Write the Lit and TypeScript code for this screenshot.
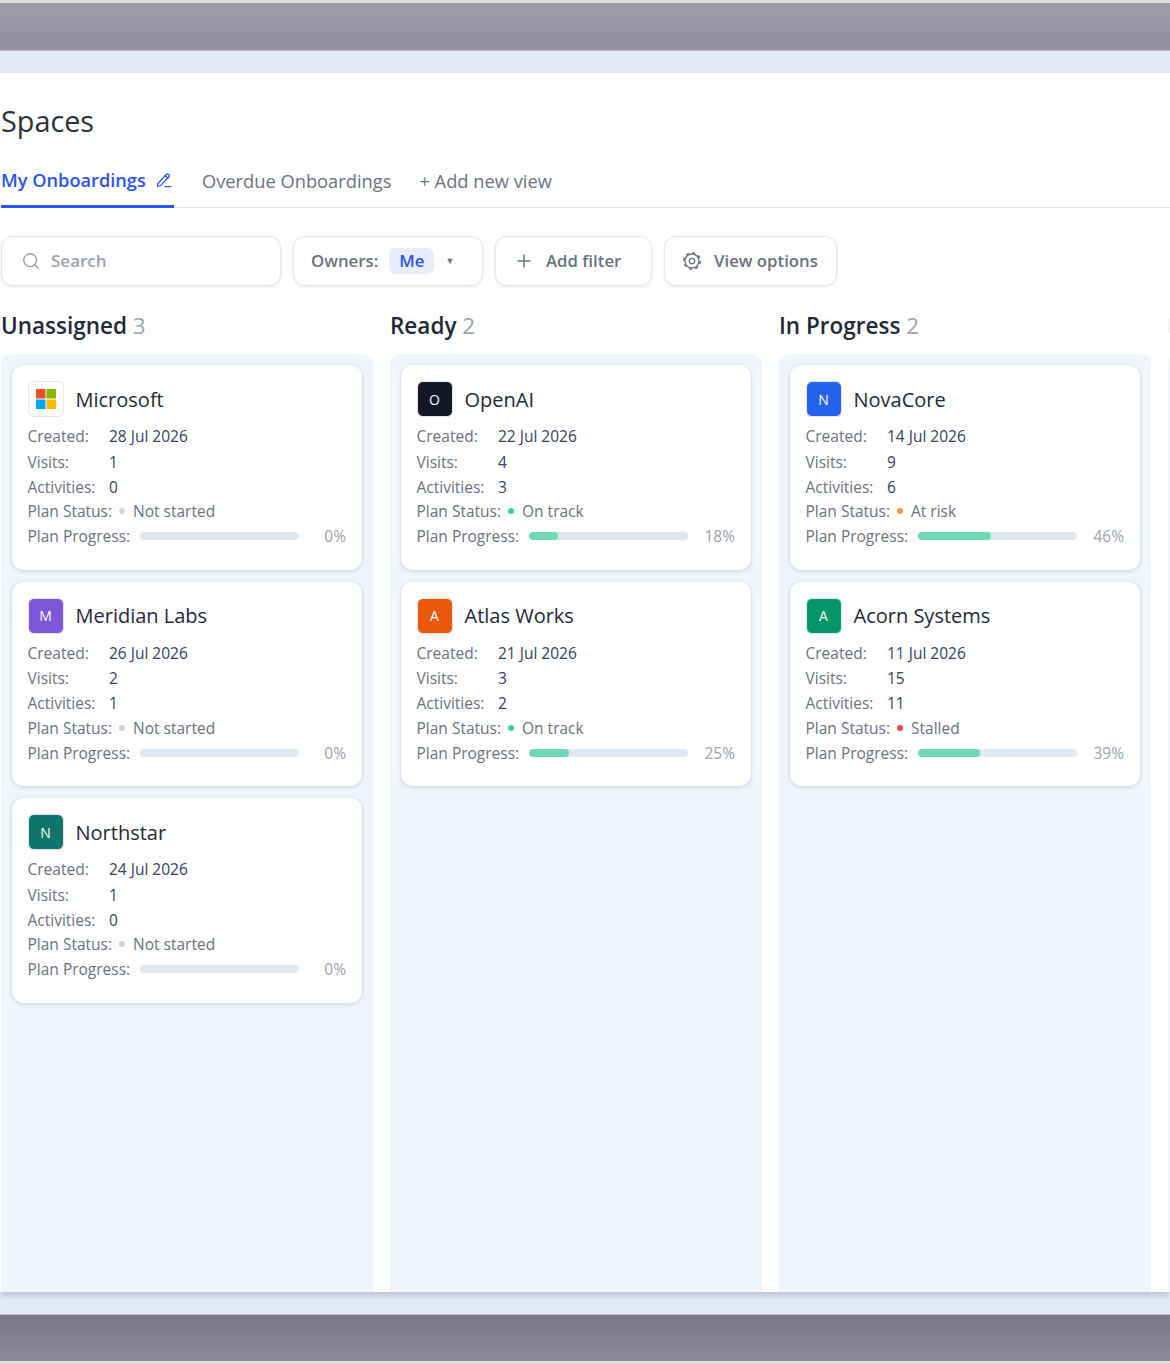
import { LitElement, html, css } from 'lit';
import { customElement } from 'lit/decorators.js';

type Card = {
  name: string;
  logo: string;
  color?: string;
  created: string;
  visits: number;
  activities: number;
  status: string;
  dot: string;
  progress: number;
};

const columns: { title: string; cards: Card[] }[] = [
  {
    title: 'Unassigned',
    cards: [
      { name: 'Microsoft', logo: 'ms', created: '28 Jul 2026', visits: 1, activities: 0, status: 'Not started', dot: '#cbd5e1', progress: 0 },
      { name: 'Meridian Labs', logo: 'M', color: '#7c55d9', created: '26 Jul 2026', visits: 2, activities: 1, status: 'Not started', dot: '#cbd5e1', progress: 0 },
      { name: 'Northstar', logo: 'N', color: '#0f766e', created: '24 Jul 2026', visits: 1, activities: 0, status: 'Not started', dot: '#cbd5e1', progress: 0 },
    ],
  },
  {
    title: 'Ready',
    cards: [
      { name: 'OpenAI', logo: 'O', color: '#111827', created: '22 Jul 2026', visits: 4, activities: 3, status: 'On track', dot: '#34d399', progress: 18 },
      { name: 'Atlas Works', logo: 'A', color: '#ea580c', created: '21 Jul 2026', visits: 3, activities: 2, status: 'On track', dot: '#34d399', progress: 25 },
    ],
  },
  {
    title: 'In Progress',
    cards: [
      { name: 'NovaCore', logo: 'N', color: '#2563eb', created: '14 Jul 2026', visits: 9, activities: 6, status: 'At risk', dot: '#fb923c', progress: 46 },
      { name: 'Acorn Systems', logo: 'A', color: '#059669', created: '11 Jul 2026', visits: 15, activities: 11, status: 'Stalled', dot: '#ef4444', progress: 39 },
    ],
  },
];

@customElement('app-root')
export class AppRoot extends LitElement {
  static styles = css`
    :host {
      display: block;
      height: 1364px;
      overflow: hidden;
      background: #e2e8f4;
      font-family: 'Open Sans', sans-serif;
      color: #1f2937;
    }
    .edge {
      height: 3px;
      background: #dedede;
    }
    .chrome {
      height: 48px;
      background: linear-gradient(#9e9ba9, #908d9d);
      border-bottom: 1px solid #b9b8c6;
      box-sizing: border-box;
    }
    .chrome.bottom {
      height: 47px;
      background: linear-gradient(#797786, #8d8a9b);
      border-bottom: 0;
      border-top: 1px solid #c3c2d2;
    }
    .gap {
      height: 22px;
    }
    .panel {
      height: 1219px;
      background: #fff;
      box-shadow: 0 4px 5px -1px rgba(90, 100, 130, 0.3);
      position: relative;
      overflow: hidden;
      display: flex;
      flex-direction: column;
    }
    h1 {
      margin: 28px 0 0 1px;
      font-size: 28.8px;
      line-height: 40px;
      font-weight: 500;
      color: #2d3239;
    }
    .tabs {
      display: flex;
      align-items: stretch;
      margin-top: 20px;
      height: 47px;
      box-sizing: border-box;
      border-bottom: 1px solid #e5e7eb;
      font-size: 18.3px;
      color: #6b7280;
      white-space: nowrap;
    }
    .tab {
      display: flex;
      align-items: center;
      height: 47px;
      padding-bottom: 9px;
      box-sizing: border-box;
    }
    .tab.active {
      margin-left: 1px;
      width: 173px;
      gap: 10px;
      color: #2b55ee;
      font-size: 18.2px;
      font-weight: 600;
      padding-bottom: 6px;
      border-bottom: 3px solid #2b55ee;
    }
    .tab.over {
      margin-left: 28px;
    }
    .tab.add {
      margin-left: 28px;
    }
    .tools {
      display: flex;
      gap: 12px;
      margin: 28px 0 0 1px;
    }
    .tool {
      height: 50px;
      box-sizing: border-box;
      display: flex;
      align-items: center;
      border: 1.5px solid #e5e7eb;
      border-radius: 12px;
      box-shadow: 0 1px 3px rgba(17, 24, 39, 0.1);
      background: #fff;
      font-size: 16.8px;
      font-weight: 600;
      color: #6b7280;
      white-space: nowrap;
      padding-bottom: 1px;
    }
    .search {
      width: 280px;
      padding-left: 20px;
      gap: 11px;
      color: #9ca3af;
      font-size: 17px;
    }
    .owners {
      width: 190px;
      padding-left: 17px;
    }
    .chip {
      margin-left: 11px;
      padding: 0 10px;
      height: 26px;
      line-height: 26px;
      border-radius: 7px;
      background: #e8eefc;
      color: #2b55ee;
    }
    .caret {
      margin-left: 11px;
      font-size: 9px;
    }
    .filter {
      width: 157px;
      padding-left: 20px;
      gap: 14px;
    }
    .view {
      width: 173px;
      padding-left: 17px;
      gap: 12px;
    }
    .board {
      display: flex;
      gap: 17px;
      margin-top: 25px;
      padding-left: 1px;
      flex: 1;
      min-height: 0;
    }
    .column {
      flex: 0 0 372px;
      display: flex;
      flex-direction: column;
    }
    .col-title {
      height: 30px;
      line-height: 30px;
      font-size: 22.5px;
      font-weight: 600;
      color: #1f2937;
      margin-bottom: 13px;
    }
    .col-title span {
      font-weight: 400;
      color: #9ca3af;
    }
    .lane {
      flex: 1;
      background: #f0f4fc;
      border-radius: 10px 10px 0 0;
      padding: 11px;
      display: flex;
      flex-direction: column;
      gap: 12px;
    }
    .ghost-head {
      height: 15px;
      margin: 7px 0 21px;
      width: 4px;
      background: #f1f2f4;
    }
    .card {
      height: 204.5px;
      box-sizing: border-box;
      background: #fff;
      border-radius: 12px;
      box-shadow: 0 1px 4px rgba(17, 24, 39, 0.16);
      padding: 16px 16px 16px 15.5px;
      font-size: 15.5px;
    }
    .head {
      display: flex;
      align-items: center;
      gap: 12px;
      margin-bottom: 6px;
    }
    .logo {
      width: 36px;
      height: 36px;
      box-sizing: border-box;
      border-radius: 6px;
      border: 1px solid #e5e7eb;
      display: flex;
      align-items: center;
      justify-content: center;
      color: #fff;
      font-size: 14px;
      font-weight: 500;
    }
    .name {
      font-size: 20px;
      font-weight: 500;
      color: #1f2937;
    }
    .row {
      display: flex;
      align-items: center;
      color: #6b7280;
      height: 25px;
    }
    .row.first {
      height: 26px;
    }
    .row.tight {
      height: 24px;
    }
    .label {
      width: 81.5px;
    }
    .value {
      color: #374160;
    }
    .status {
      display: flex;
      align-items: center;
      margin-left: 7px;
      gap: 8px;
    }
    .dot {
      width: 6px;
      height: 6px;
      border-radius: 50%;
    }
    .bar {
      width: 159px;
      height: 8px;
      margin-left: 10px;
      border-radius: 4px;
      background: #e2e8f0;
      overflow: hidden;
    }
    .fill {
      height: 100%;
      border-radius: 4px;
      background: #6ed8b6;
    }
    .pct {
      margin-left: auto;
      color: #9ca3af;
    }
    svg {
      display: block;
      flex: none;
    }
  `;

  private renderLogo(c: Card) {
    if (c.logo === 'ms') {
      return html`<div class="logo">
        <svg width="20" height="20" viewBox="0 0 20 20">
          <rect width="9.5" height="9.5" fill="#f25022" />
          <rect x="10.5" width="9.5" height="9.5" fill="#7fba00" />
          <rect y="10.5" width="9.5" height="9.5" fill="#00a4ef" />
          <rect x="10.5" y="10.5" width="9.5" height="9.5" fill="#ffb900" />
        </svg>
      </div>`;
    }
    return html`<div class="logo" style="background:${c.color}">${c.logo}</div>`;
  }

  private renderCard(c: Card) {
    return html`<div class="card">
      <div class="head">${this.renderLogo(c)}<div class="name">${c.name}</div></div>
      <div class="row first"><div class="label">Created:</div><div class="value">${c.created}</div></div>
      <div class="row"><div class="label">Visits:</div><div class="value">${c.visits}</div></div>
      <div class="row"><div class="label">Activities:</div><div class="value">${c.activities}</div></div>
      <div class="row tight">
        <div>Plan Status:</div>
        <div class="status"><span class="dot" style="background:${c.dot}"></span>${c.status}</div>
      </div>
      <div class="row first">
        <div>Plan Progress:</div>
        <div class="bar"><div class="fill" style="width:${c.progress}%"></div></div>
        <div class="pct">${c.progress}%</div>
      </div>
    </div>`;
  }

  render() {
    return html`
      <div class="edge"></div>
      <div class="chrome"></div>
      <div class="gap"></div>
      <div class="panel">
        <h1>Spaces</h1>
        <div class="tabs">
          <div class="tab active">
            My Onboardings
            <svg width="16" height="16" viewBox="0 0 18 18" fill="none" stroke="currentColor" stroke-width="1.4" stroke-linejoin="round" stroke-linecap="round">
              <path d="M2 13.2 11.6 2.6a1.6 1.6 0 0 1 2.3-.1l.6.6a1.6 1.6 0 0 1 0 2.2L4.9 15.6 1.6 16z" />
              <path d="M10.3 4l3 3M10 16.4h6.5" />
            </svg>
          </div>
          <div class="tab over">Overdue Onboardings</div>
          <div class="tab add">+ Add new view</div>
        </div>
        <div class="tools">
          <div class="tool search">
            <svg width="18" height="18" viewBox="0 0 18 18" fill="none" stroke="currentColor" stroke-width="1.4" stroke-linecap="round">
              <circle cx="8.2" cy="8.2" r="6.4" />
              <path d="m13 13 3.4 3.4" />
            </svg>
            Search
          </div>
          <div class="tool owners">Owners:<span class="chip">Me</span><span class="caret">▼</span></div>
          <div class="tool filter">
            <svg width="16" height="16" viewBox="0 0 16 16" fill="none" stroke="currentColor" stroke-width="1.5">
              <path d="M8 1.5v13M1.5 8h13" />
            </svg>
            Add filter
          </div>
          <div class="tool view">
            <svg width="20" height="20" viewBox="0 0 20 20" fill="none" stroke="currentColor">
              <circle cx="10" cy="10" r="7" stroke-width="1.3" />
              <circle cx="10" cy="10" r="8.2" stroke-width="1.6" stroke-dasharray="3 3.44" />
              <circle cx="10" cy="10" r="2.7" stroke-width="1.3" />
            </svg>
            View options
          </div>
        </div>
        <div class="board">
          ${columns.map(
            col => html`<div class="column">
              <div class="col-title">${col.title} <span>${col.cards.length}</span></div>
              <div class="lane">${col.cards.map(c => this.renderCard(c))}</div>
            </div>`
          )}
          <div class="column">
            <div class="ghost-head"></div>
            <div class="lane"></div>
          </div>
        </div>
      </div>
      <div class="gap"></div>
      <div class="chrome bottom"></div>
      <div class="edge"></div>
    `;
  }
}
